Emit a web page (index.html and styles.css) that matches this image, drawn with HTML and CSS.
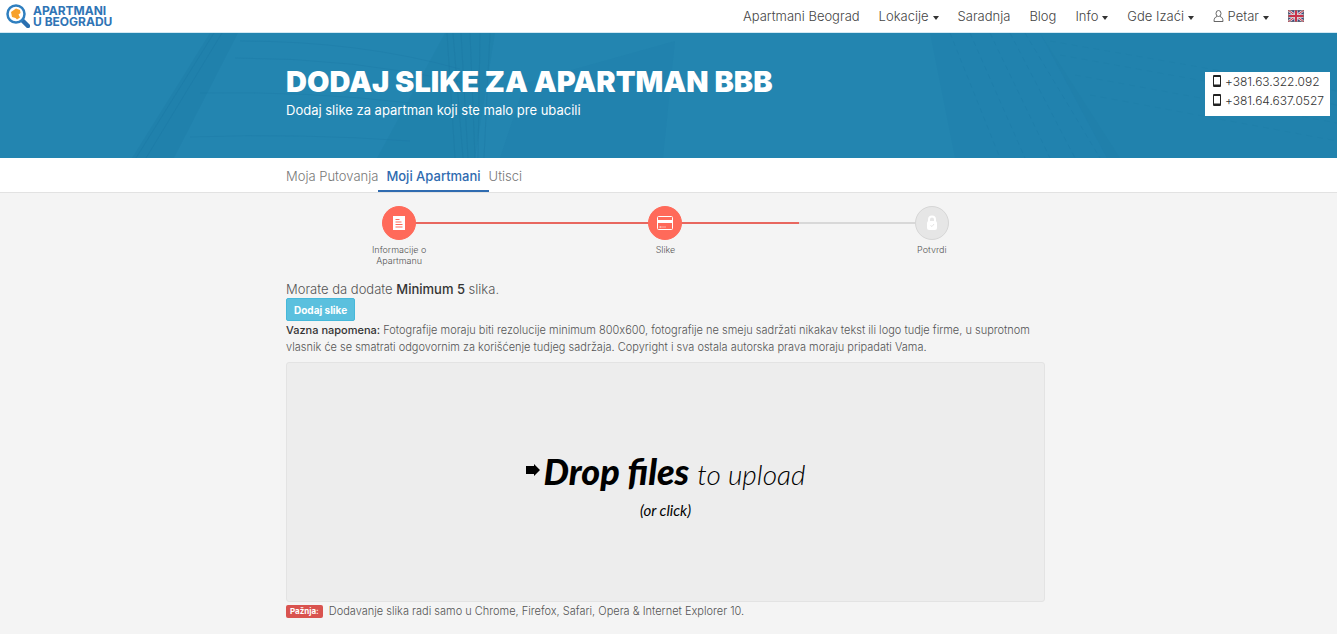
FILE: index.html
```html
<!DOCTYPE html>
<html lang="sr">
	<head>
		<meta charset="utf-8">
		<meta name="viewport" content="width=device-width, initial-scale=1">
		<title>Dodaj slike - Apartmani u Beogradu</title>
		<link rel="stylesheet" href="styles.css">
	</head>

	<body>
		<header class="topbar">
			<a class="logo" href="#">
				<svg class="logo-icon" width="24" height="24" viewBox="0 0 24 24">
					<path d="M16.500 16.500l5.500 5.500" stroke="#2a6fb0" stroke-width="4.500" stroke-linecap="round"/>
					<circle cx="10" cy="10" r="8.500" fill="#fff" stroke="#2f7fbf" stroke-width="2.500"/>
					<path d="M5 8l5-3.500 4 1.500 .5 3-2 1.500 1.500 3-3 2-1.500-1.500L6 13z" fill="#f7a12c"/>
				</svg>
				<span class="logo-text">APARTMANI<br>U BEOGRADU</span>
			</a>
			<nav class="menu">
				<a href="#">Apartmani Beograd</a>
				<a class="caret" href="#">Lokacije</a>
				<a href="#">Saradnja</a>
				<a href="#">Blog</a>
				<a class="caret" href="#">Info</a>
				<a class="caret" href="#">Gde Izaći</a>
				<a class="caret" href="#">
					<svg class="user-icon" width="11" height="12" viewBox="0 0 11 12" fill="none" stroke="#666">
						<ellipse cx="5.500" cy="3.500" rx="2.500" ry="3"/>
						<path d="M4 6.500C2 7 1 8.500 1 11.500h9C10 8.500 9 7 7 6.500"/>
					</svg>
					Petar</a>
				<a class="lang" href="#" aria-label="English">
					<svg width="16" height="12" viewBox="0 0 16 12">
						<rect width="16" height="12" rx="1" fill="#3b4580"/>
						<path d="M0 0l16 12M16 0L0 12" stroke="#ddd" stroke-width="2.600"/>
						<path d="M0 0l16 12M16 0L0 12" stroke="#c8324a" stroke-width="1"/>
						<path d="M8 0v12M0 6h16" stroke="#ddd" stroke-width="3.400"/>
						<path d="M8 0v12M0 6h16" stroke="#c8324a" stroke-width="2"/>
						<rect x=".5" y=".5" width="15" height="11" rx="1" fill="none" stroke="#777" stroke-opacity=".6"/>
					</svg>
				</a>
			</nav>
		</header>

		<section class="hero">
			<!-- bridge and building silhouettes -->
			<svg class="hero-art" viewBox="0 0 1337 125" preserveAspectRatio="xMidYMid slice" fill="none" stroke="#16709b">
				<path d="M210 0h28L174 125h-42z" fill="#16709b" opacity=".18" stroke="none"/>
				<path d="M214 0L136 125M222 0L146 125" opacity=".2"/>
				<path d="M240 8q120 0 220 28M235 25q120 0 230 25M190 104q110-4 220 4M200 60q110-2 210 10" opacity=".2"/>
				<path d="M445 0h50l-20 125h-98z" fill="#16709b" opacity=".15" stroke="none"/>
				<path d="M447 0l8 125M453 0l10 125M461 0l7 125M470 0l5 125M480 0l-2 125M490 0l-6 125" opacity=".25"/>
				<path d="M525 50l150-42-12 117H500z" fill="#16709b" opacity=".1" stroke="none"/>
				<path d="M930 0h110l80 125H955z" fill="#16709b" opacity=".1" stroke="none"/>
				<path d="M950 0l50 125M970 0l55 125M990 0l60 125M1010 0l65 125M1025 0l75 125" stroke-dasharray="5 4" opacity=".2"/>
				<path d="M1040 0h297v125h-230z" fill="#16709b" opacity=".12" stroke="none"/>
				<path d="M1050 8l287 50M1060 22l277 50M1075 42l262 48M1090 62l247 46" stroke-dasharray="6 5" opacity=".15"/>
			</svg>
			<div class="container hero-text">
				<h1>DODAJ SLIKE ZA APARTMAN BBB</h1>
				<p>Dodaj slike za apartman koji ste malo pre ubacili</p>
			</div>
			<div class="phones">
				<a href="tel:+38163322092">
					<svg width="8" height="12" viewBox="0 0 8 12"><path fill="#222" fill-rule="evenodd" d="M1 0h6q1 0 1 1v10q0 1-1 1H1q-1 0-1-1V1q0-1 1-1zM1 2v7.500h6V2z"/></svg>
					+381.63.322.092</a>
				<a href="tel:+381646370527">
					<svg width="8" height="12" viewBox="0 0 8 12"><path fill="#222" fill-rule="evenodd" d="M1 0h6q1 0 1 1v10q0 1-1 1H1q-1 0-1-1V1q0-1 1-1zM1 2v7.500h6V2z"/></svg>
					+381.64.637.0527</a>
			</div>
		</section>

		<nav class="tabs">
			<div class="container tabs-list">
				<a href="#">Moja Putovanja</a>
				<a class="active" href="#">Moji Apartmani</a>
				<a href="#">Utisci</a>
			</div>
		</nav>

		<main class="container">
			<ol class="steps">
				<li class="done">
					<span class="dot">
						<svg width="12" height="14" viewBox="0 0 12 14"><path fill="#fff" d="M0 0h12v14H0z"/><path d="M2.500 3.500h4M2.500 6h6M2.500 8.500h7M2.500 11h7" stroke="#ff6a5a"/></svg>
					</span>
					Informacije o<br>Apartmanu
				</li>
				<li class="done">
					<span class="dot">
						<svg width="16" height="14" viewBox="0 0 16 14"><rect x=".5" y=".5" width="15" height="13" rx="1" fill="none" stroke="#fff"/><path d="M0 4h16v3H0z" fill="#fff"/><path d="M2.500 11h2M5.500 11h1M7.500 11h1" stroke="#fff"/></svg>
					</span>
					Slike
				</li>
				<li>
					<span class="dot">
						<svg width="12" height="16" viewBox="0 0 12 16"><path d="M3 7V4.500a3 3 0 0 1 6 0V7" fill="none" stroke="#fff" stroke-width="2"/><rect x="1" y="6" width="10" height="9" rx="2" fill="#fff"/><path d="M4.500 10.500l1.500 1 2-2.500" fill="none" stroke="#e4e4e4"/></svg>
					</span>
					Potvrdi
				</li>
			</ol>

			<p class="lead">Morate da dodate <strong>Minimum 5</strong> slika.</p>
			<button class="btn" type="button">Dodaj slike</button>
			<p class="note"><strong>Vazna napomena:</strong> Fotografije moraju biti rezolucije minimum 800x600, fotografije ne smeju sadržati nikakav tekst ili logo tudje firme, u suprotnom vlasnik će se smatrati odgovornim za korišćenje tudjeg sadržaja. Copyright i sva ostala autorska prava moraju pripadati Vama.</p>

			<button class="dropzone" type="button">
				<span class="drop-title">
					<svg width="14" height="12" viewBox="0 0 14 12"><path d="M0 2h8V0l6 6-6 6v-2H0z"/></svg>
					<b>Drop files</b>
					<span>to upload</span>
				</span>
				<span class="drop-hint">(or click)</span>
			</button>

			<p class="warning"><span class="label">Pažnja:</span> Dodavanje slika radi samo u Chrome, Firefox, Safari, Opera &amp; Internet Explorer 10.</p>
		</main>
	</body>
</html>
```

FILE: styles.css
```css
* {
	box-sizing: border-box;
}

body {
	margin: 0;
	background-color: #f4f4f4;
	color: #555;
	font: 300 13px/19px Inter, "Liberation Sans", sans-serif;
	font-variant-ligatures: no-contextual;
}

h1, p, ol {
	margin: 0;
	padding: 0;
}

a {
	color: inherit;
	text-decoration: none;
}

strong {
	color: #333;
	font-weight: 500;
}

.container {
	max-width: 765px;
	margin: 0 auto;
	padding-right: 6px;
}

/* top bar */
.topbar {
	display: flex;
	justify-content: space-between;
	align-items: center;
	height: 33px;
	padding: 0 33px 0 6px;
	background-color: #fff;
	border-bottom: 1px solid #d3e9f3;
}

.logo {
	display: flex;
	align-items: center;
	gap: 3px;
}

.logo-text {
	color: #2f74b5;
	font-size: 12px;
	font-weight: 700;
	line-height: 11px;
}

.menu {
	display: flex;
	align-items: center;
	gap: 19px;
	color: #444;
}

.caret::after {
	content: "";
	display: inline-block;
	margin-left: 4px;
	border: 3px solid transparent;
	border-top: 4px solid #333;
	border-bottom: 0;
	vertical-align: 1px;
}

.user-icon {
	vertical-align: -1px;
}

.lang {
	display: flex;
}

/* hero */
.hero {
	position: relative;
	height: 125px;
	padding-top: 32px;
	background-color: #2385b0;
	color: #fff;
}

.hero-art {
	position: absolute;
	top: 0;
	left: 0;
	width: 100%;
	height: 100%;
}

.hero-text {
	position: relative;
	font-weight: 400;
}

.hero-text h1 {
	margin-bottom: 2px;
	font-size: 29px;
	font-weight: 900;
	line-height: 34px;
}

.phones {
	position: absolute;
	top: 39px;
	right: 7px;
	display: flex;
	flex-direction: column;
	height: 44px;
	padding: 0 6px 0 8px;
	background-color: #fff;
	color: #333;
	font-size: 12px;
}

.phones svg {
	margin-right: 1px;
	vertical-align: -1px;
}

/* tabs */
.tabs {
	background-color: #fff;
	border-bottom: 1px solid #e2e2e2;
}

.tabs-list {
	display: flex;
	color: #777;
}

.tabs-list a {
	height: 34px;
	line-height: 36px;
}

.tabs-list .active {
	padding: 0 8px;
	border-bottom: 2px solid #2f6bb0;
	color: #2f6bb0;
	font-weight: 500;
}

/* steps */
.steps {
	position: relative;
	display: grid;
	grid-template-columns: repeat(3, 1fr);
	margin: 13px -20px 15px;
	list-style: none;
	font-size: 9px;
	line-height: 11px;
	text-align: center;
}

.steps::before {
	content: "";
	position: absolute;
	top: 16px;
	left: 16.666%;
	right: 16.666%;
	height: 2px;
	background: linear-gradient(to right, #e8675f 75%, #d8d8d8 75%);
}

.dot {
	position: relative;
	display: flex;
	justify-content: center;
	align-items: center;
	width: 34px;
	height: 34px;
	margin: 0 auto 4px;
	border: 1px solid #d6d6d6;
	border-radius: 50%;
	background-color: #e6e6e6;
}

.done .dot {
	border-color: #ff6a5a;
	background-color: #ff6a5a;
}

/* upload */
.lead {
	line-height: 17px;
}

.btn {
	display: block;
	height: 23px;
	padding: 0 7px;
	border: 1px solid #46b8da;
	border-radius: 2px;
	background-color: #5bc0de;
	color: #fff;
	font: 700 10px Inter, sans-serif;
	cursor: pointer;
}

.note {
	margin: 1px 0 6px;
	padding-right: 10px;
	font-size: 11px;
	line-height: 17px;
}

.dropzone {
	display: flex;
	flex-direction: column;
	justify-content: center;
	align-items: center;
	width: 100%;
	height: 240px;
	padding: 4px 0 0;
	border: 1px solid #e3e3e3;
	border-radius: 3px;
	background-color: #ededed;
	color: #000;
	font-family: Lato, sans-serif;
	font-style: italic;
	cursor: pointer;
}

.drop-title {
	display: flex;
	align-items: baseline;
	gap: 4px;
	font-size: 28px;
	font-weight: 300;
	line-height: 48px;
}

.drop-title svg {
	align-self: center;
	margin-bottom: 4px;
}

.drop-title b {
	margin-right: 4px;
	font-size: 36px;
	font-weight: 900;
}

.drop-hint {
	font-size: 15px;
	font-weight: 400;
	line-height: 24px;
}

.warning {
	display: flex;
	align-items: center;
	gap: 6px;
	font-size: 11px;
}

.label {
	padding: 0 4px;
	border-radius: 2px;
	background-color: #d9534f;
	color: #fff;
	font-size: 8px;
	font-weight: 700;
	line-height: 13px;
}
```
